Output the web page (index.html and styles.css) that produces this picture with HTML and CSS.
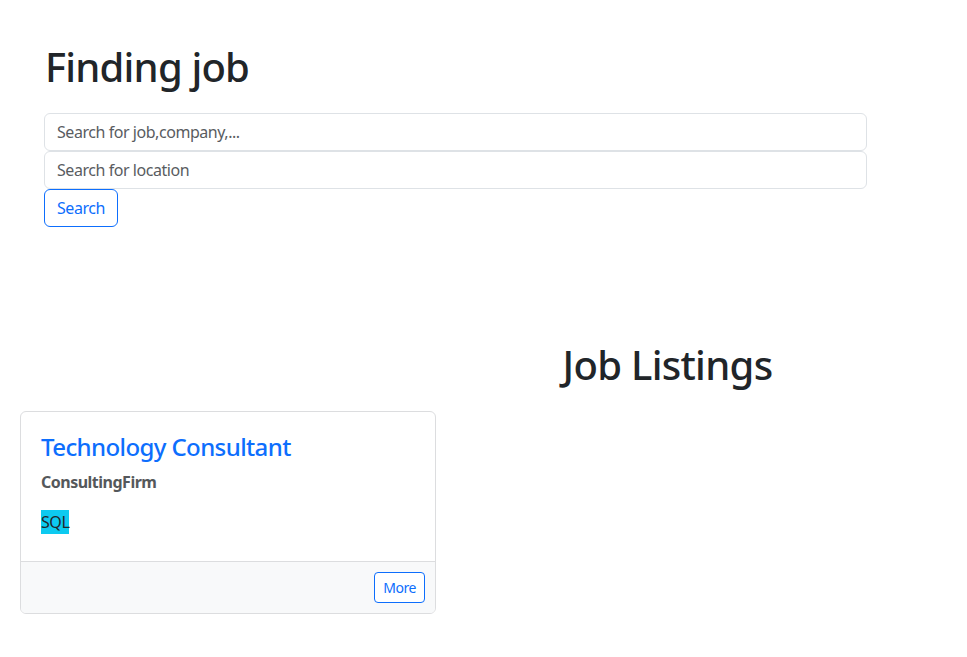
FILE: index.html
```html
<!DOCTYPE html>
<html lang="en">
<head>
<meta charset="utf-8">
<title>Finding job</title>
<link rel="stylesheet" href="styles.css">
</head>
<body>
<section class="search">
  <h1 class="page-title">Finding job</h1>
  <form class="search-form">
    <input class="field" type="text" placeholder="Search for job,company,...">
    <input class="field" type="text" placeholder="Search for location">
    <div><button class="btn btn-outline" type="button">Search</button></div>
  </form>
</section>
<section class="listings">
  <h1 class="listings-title">Job Listings</h1>
  <div class="cards">
    <article class="card">
      <div class="card-body">
        <h3 class="job-title">Technology Consultant</h3>
        <h6 class="company">ConsultingFirm</h6>
        <div class="tags"><span class="tag">SQL</span></div>
      </div>
      <div class="card-footer">
        <button class="btn btn-outline btn-sm" type="button">More</button>
      </div>
    </article>
  </div>
</section>
</body>
</html>
```
FILE: styles.css
```css
* { box-sizing: border-box; }
body {
  margin: 0;
  font-family: "Segoe UI", "Noto Sans", "Open Sans", sans-serif;
  font-size: 16px;
  line-height: 1.5;
  letter-spacing: -0.45px;
  color: #212529;
  background: #fff;
}
.search {
  padding-left: 44px;
  width: 867px;
}
.page-title {
  margin: 43px 0 22px 1px;
  font-size: 40px;
  line-height: 48px;
  font-weight: 500;
  letter-spacing: -0.8px;
}
.search-form {
  display: flex;
  flex-direction: column;
}
.field {
  display: block;
  width: 100%;
  height: 38px;
  padding: 6px 12px;
  font: inherit;
  letter-spacing: inherit;
  color: #212529;
  border: 1px solid #dee2e6;
  border-radius: 6px;
  background: #fff;
}
.field::placeholder { color: #595c5f; }
.btn {
  font: inherit;
  letter-spacing: inherit;
  background: #fff;
  color: #0d6efd;
  border: 1px solid #0d6efd;
  border-radius: 6px;
  padding: 6px 12px;
  line-height: 24px;
  height: 38px;
}
.btn-sm {
  font-size: 14px;
  line-height: 21px;
  height: 31px;
  padding: 4px 8px;
  border-radius: 4px;
}
.listings {
  margin-top: 114px;
}
.listings-title {
  margin: 0 0 22px 0;
  padding-left: 368px;
  text-align: center;
  font-size: 40px;
  line-height: 48px;
  font-weight: 500;
  letter-spacing: -0.7px;
}
.cards {
  padding-left: 20px;
}
.card {
  width: 416px;
  border: 1px solid #dcdddf;
  border-radius: 6px;
  overflow: hidden;
  background: #fff;
}
.card-body {
  padding: 21px 20px 27px;
}
.job-title {
  margin: 0 0 8px;
  font-size: 24px;
  line-height: 28.8px;
  font-weight: 500;
  letter-spacing: -0.6px;
  color: #0d6efd;
}
.company {
  margin: 0 0 16px;
  font-size: 16px;
  line-height: 24px;
  font-weight: 700;
  letter-spacing: -0.5px;
  color: #55585b;
}
.tags { line-height: 24px; height: 24px; }
.tag {
  display: inline-block;
  background: #0dcaf0;
  color: #212529;
  line-height: 24px;
}
.card-footer {
  border-top: 1px solid #dcdddf;
  background: #f8f9fa;
  padding: 10px;
  display: flex;
  justify-content: flex-end;
}
```
